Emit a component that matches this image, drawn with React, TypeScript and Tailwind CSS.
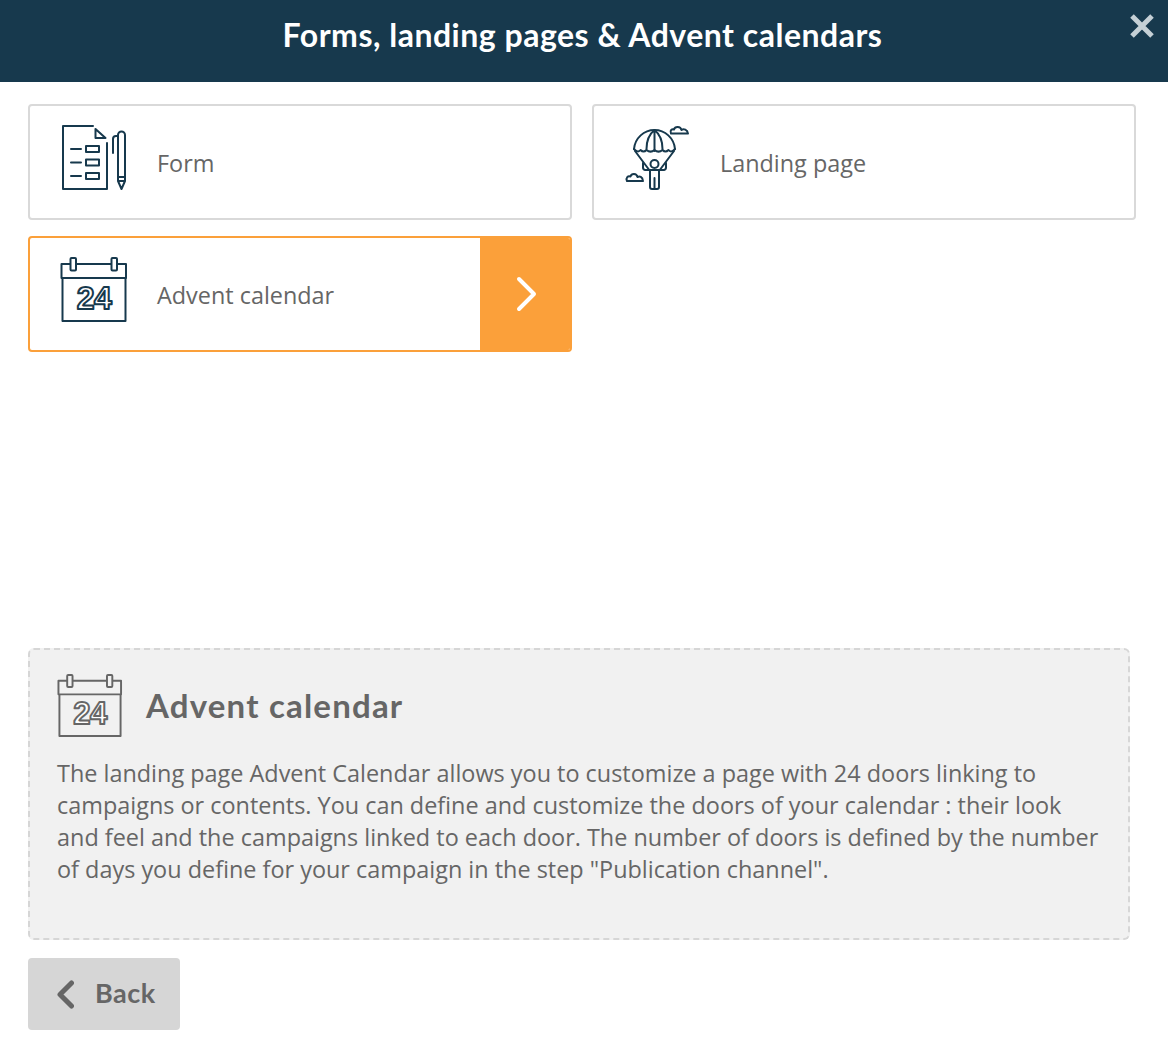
const navy = '#17394d';

function FormIcon() {
  return (
    <svg className="w-[68px] h-[68px] shrink-0 -mt-[8px]" viewBox="60 124 68 68" fill="none" stroke={navy} strokeWidth={2} strokeLinejoin="round" strokeLinecap="round">
      <path d="M93 126H63v63h44v-46" />
      <path d="M95.500 129v9h10z" />
      <path d="M71 149h10M71 162.500h10M71 176h10" />
      <rect x="86" y="146" width="13" height="6" />
      <rect x="86" y="159.500" width="13" height="6" />
      <rect x="86" y="173" width="13" height="6" />
      <path d="M118 177v-42a3.500 3.500 0 0 1 7 0v42z" />
      <path d="M118 136h-2a3 3 0 0 0-3 3V153" />
      <path d="M118 177v4l3.500 8 3.500-8v-4M118 181h7" />
    </svg>
  );
}

function ParachuteIcon() {
  return (
    <svg className="w-[68px] h-[68px] shrink-0 -mt-[8px] -ml-[2px] mr-[1px]" viewBox="622 124 68 68" fill="none" stroke={navy} strokeWidth={2} strokeLinejoin="round" strokeLinecap="round">
      <path d="M634 149c1-11 10-19 20.500-19S674 138 675 149" />
      <path d="M654.500 130c-5 4-8 11-8 19M654.500 130c5 4 8 11 8 19M654.500 130v21" />
      <path d="M634 149c2.500 3 5 3 6.500 1 2 2 4 2 6 0 2.500 2 5.500 2 8 0 2.500 2 5.500 2 8 0 2 2 4 2 6 0 1.500 2 4 2 6.500-1" />
      <path d="M635 151l15 20M674 151l-15 20" />
      <circle cx="654.500" cy="164" r="4" />
      <path d="M650 171v16a2 2 0 0 0 2 2h5a2 2 0 0 0 2-2v-16" />
      <path d="M654.500 189v-11" />
      <path d="M643 163v4.500a2.500 2.500 0 0 0 2 2.500h19a2.500 2.500 0 0 0 2-2.500V163" />
      <path d="M671 133.500c-1.500-3 1-5 3-4 1-3.500 6.500-3.500 7.500.5 2-1.500 6-.5 6.500 3.500z" />
      <path d="M627 181c-1.500-3.500 1-5.500 3.500-4.500 1-3.500 6-3.500 7 .5 2-1 5-.5 5.500 4z" />
    </svg>
  );
}

function CalendarIcon({ color, width, className }: { color: string; width: number; className: string }) {
  return (
    <svg className={`shrink-0 ${className}`} viewBox="60 256 68 68" fill="none" stroke={color} strokeWidth={width} strokeLinejoin="round">
      <path d="M70.500 264H61.500V278H126V264H117.500M76 264H111.500" />
      <rect x="70.500" y="258" width="5.500" height="12.500" rx="1" />
      <rect x="111.500" y="258" width="5.500" height="12.500" rx="1" />
      <path d="M62.500 278V321H125.500V278" />
      <text
        x="94"
        y="309"
        textAnchor="middle"
        fontFamily="'Liberation Sans', sans-serif"
        fontWeight="700"
        fontSize="32"
        fill="#fff"
        stroke={color}
        strokeWidth={width}
        letterSpacing="-0.5"
      >
        24
      </text>
    </svg>
  );
}

function Card({ icon, label, active }: { icon: React.ReactNode; label: string; active?: boolean }) {
  return (
    <div className={`h-[116px] flex items-stretch rounded border-2 overflow-hidden ${active ? 'border-[#fba03a]' : 'border-[#d9d9d9]'}`}>
      <div className="flex-1 flex items-center pl-[30px]">
        {icon}
        <span className="ml-[29px] pt-[3px] text-[23.400px] text-[#666]">{label}</span>
      </div>
      {active && (
        <div className="w-[90px] bg-[#fba03a] flex items-center justify-center">
          <svg className="w-[24px] h-[36px]" viewBox="0 0 24 36" fill="none" stroke="#fff" strokeWidth={4} strokeLinecap="round" strokeLinejoin="round">
            <path d="M6 3l15 15L6 33" />
          </svg>
        </div>
      )}
    </div>
  );
}

export default function App() {
  return (
    <div className="min-h-[1052px] bg-white font-['Open_Sans',sans-serif]">
      {/* Header */}
      <header className="relative h-[82px] flex items-center justify-center pb-[12px] bg-[#17394d]">
        <h1 className="pr-[3px] text-[32px] tracking-[0.5px] font-bold text-white font-['Lato',sans-serif]">Forms, landing pages &amp; Advent calendars</h1>
        <svg className="absolute top-[14px] right-[13px] w-[26px] h-[24px]" viewBox="0 0 26 24" fill="none" stroke="#c5d0d6" strokeWidth={5}>
          <path d="M3 2l20 20M23 2L3 22" />
        </svg>
      </header>

      <main className="pl-[28px] pr-[32px]">
        {/* Choices */}
        <div className="grid grid-cols-2 gap-x-5 gap-y-4 pt-[22px]">
          <Card icon={<FormIcon />} label="Form" />
          <Card icon={<ParachuteIcon />} label="Landing page" />
          <Card icon={<CalendarIcon color={navy} width={2} className="w-[68px] h-[68px] -mt-[8px]" />} label="Advent calendar" active />
        </div>

        {/* Description */}
        <section className="mt-[296px] mr-[6px] h-[292px] rounded-md border-2 border-dashed border-[#d6d6d6] bg-[#f1f1f1] pl-[27px] pr-[24px] pt-[22px]">
          <div className="flex items-center">
            <CalendarIcon color="#666" width={2} className="w-[66px] h-[68px]" />
            <h2 className="ml-[23px] text-[33px] tracking-[1.200px] font-bold text-[#666] font-['Lato',sans-serif]">Advent calendar</h2>
          </div>
          <p className="mt-[17px] text-[23.430px] leading-[32px] text-[#666]">
            The landing page Advent Calendar allows you to customize a page with 24 doors linking to campaigns or contents. You can define and customize the doors of your calendar : their look and feel and the campaigns linked to each door. The number of doors is defined by the number of days you define for your campaign in the step "Publication channel".
          </p>
        </section>

        {/* Back */}
        <button className="mt-[18px] w-[152px] h-[72px] rounded bg-[#d6d6d6] flex items-center pl-[28px] text-[#666]">
          <svg className="w-[18px] h-[29px]" viewBox="0 0 18 29" fill="none" stroke="#666" strokeWidth={5} strokeLinecap="round" strokeLinejoin="round">
            <path d="M15.500 3L4 14.500 15.500 26" />
          </svg>
          <span className="ml-[21px] -mt-[2px] text-[27px] tracking-[0.5px] font-bold font-['Lato',sans-serif]">Back</span>
        </button>
      </main>
    </div>
  );
}
